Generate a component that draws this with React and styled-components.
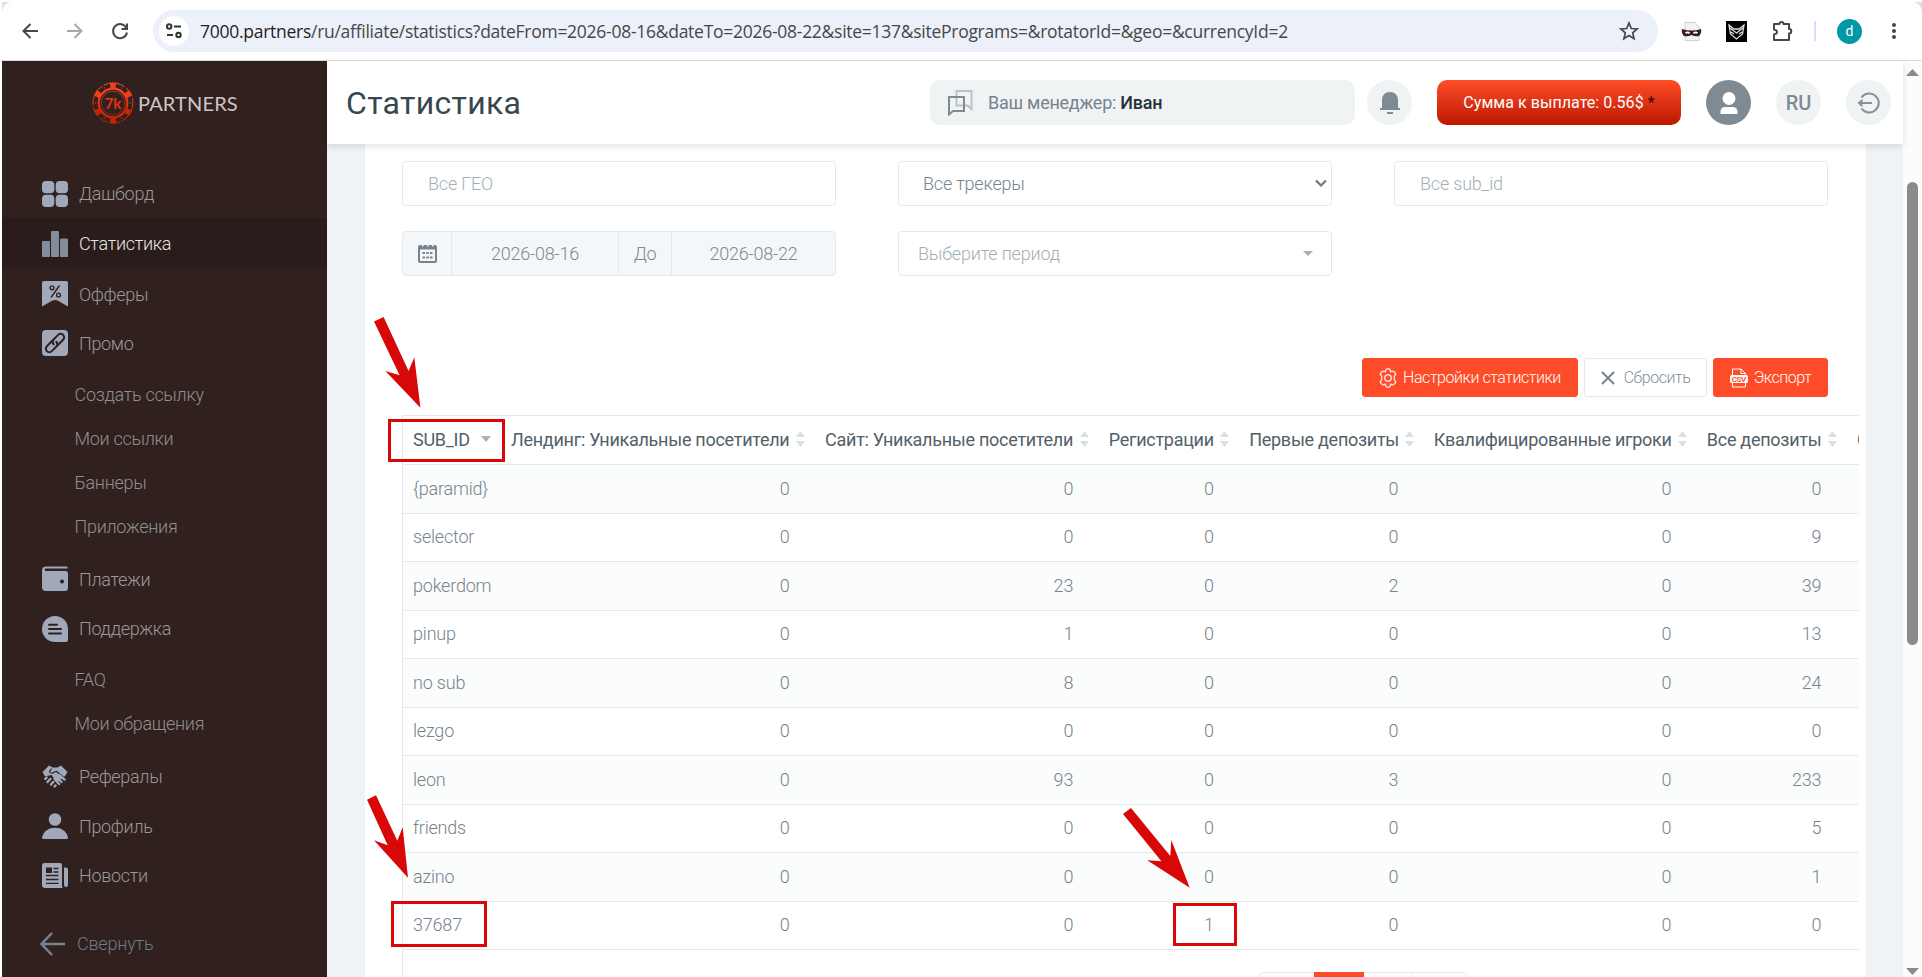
import styled, { createGlobalStyle } from 'styled-components';

const GlobalStyle = createGlobalStyle`
    * {
        box-sizing: border-box;
    }

    body {
        margin: 0;
        background: #fff;
        font-family: Roboto, "Liberation Sans", sans-serif;
        font-weight: 300;
        font-size: 18px;
        color: #76838f;
        overflow: hidden;
    }
`;

const Window = styled.div`
    position: relative;
    width: 1922px;
    height: 977px;
    padding: 2px 0 0 2px;
    overflow: hidden;
    display: flex;
    flex-direction: column;
`;

const BrowserBar = styled.div`
    height: 59px;
    flex: none;
    display: flex;
    align-items: center;
    border-bottom: 1px solid #dcdddf;
    background: #fff;
    padding: 0 22px 0 16px;
`;

const BarIcon = styled.svg`
    width: 24px;
    height: 24px;
    flex: none;
    margin-right: ${(props) => props.$gap || 0}px;
    fill: none;
    stroke: ${(props) => props.$color || '#474747'};
    stroke-width: 2;
`;

const AddressBar = styled.div`
    width: 1505px;
    height: 42px;
    flex: none;
    border-radius: 21px;
    background: #ecf0f9;
    display: flex;
    align-items: center;
    padding: 0 17px 0 6px;
    margin-right: 22px;
`;

const SiteInfo = styled.div`
    width: 30px;
    height: 30px;
    border-radius: 50%;
    background: #fff;
    display: flex;
    align-items: center;
    justify-content: center;
    margin-right: 11px;
`;

const Url = styled.div`
    flex: 1;
    font-family: "Open Sans", "Noto Sans", sans-serif;
    font-weight: 400;
    font-size: 17.5px;
    letter-spacing: -0.27px;
    color: #474747;
    white-space: nowrap;

    b {
        font-weight: 400;
        color: #1f1f1f;
    }
`;

const BarDivider = styled.div`
    width: 2px;
    height: 20px;
    flex: none;
    background: #d3e3fd;
    margin-right: 21px;
`;

const Profile = styled.div`
    width: 25px;
    height: 25px;
    flex: none;
    border-radius: 50%;
    background: #0097a7;
    color: #fff;
    font-size: 14px;
    font-weight: 400;
    display: flex;
    align-items: center;
    justify-content: center;
    margin-right: 20px;
`;

const Page = styled.div`
    flex: 1;
    display: flex;
    min-height: 0;
`;

const Sidebar = styled.nav`
    width: 325px;
    flex: none;
    background: #31211e;
    display: flex;
    flex-direction: column;
`;

const Logo = styled.div`
    height: 108px;
    padding: 21px 0 0 90px;
    flex: none;
    display: flex;
    align-items: flex-start;
`;

const LogoName = styled.span`
    font-family: Lato, sans-serif;
    font-weight: 400;
    font-size: 20px;
    line-height: 42px;
    letter-spacing: 0.15px;
    color: #cdc6c5;
    margin-left: 4px;
`;

const NavItem = styled.a`
    height: ${(props) => (props.$active ? 51 : 49.4)}px;
    flex: none;
    display: flex;
    align-items: center;
    padding-left: 40px;
    letter-spacing: -0.32px;
    color: ${(props) => (props.$active ? '#e8e4e3' : '#98999a')};
    background: ${(props) => (props.$active ? '#2a1c1a' : 'none')};

    svg {
        width: 26px;
        height: 26px;
        margin-right: 11px;
        fill: #a0a8b9;
    }
`;

const SubNav = styled.div`
    flex: none;
    padding: 4.5px 0 6.5px 72.5px;
`;

const SubItem = styled.a`
    height: 43.9px;
    display: flex;
    align-items: center;
    letter-spacing: -0.3px;
    color: #8f8f90;
`;

const Collapse = styled.a`
    display: flex;
    align-items: center;
    margin-top: 29px;
    height: 29px;
    padding-left: 38px;
    letter-spacing: -0.2px;
    color: #6f7a85;

    svg {
        width: 25px;
        height: 24px;
        margin-right: 12px;
        fill: none;
        stroke: #76838f;
        stroke-width: 2.5;
    }
`;

const Main = styled.main`
    flex: 1;
    min-width: 0;
    background: #eff3f5;
    display: flex;
    flex-direction: column;
`;

const Header = styled.header`
    height: 83px;
    flex: none;
    display: flex;
    align-items: center;
    padding: 0 12px 0 19px;
    background: #fff;
    box-shadow: 0 2px 7px rgba(0, 0, 0, 0.13);
    z-index: 1;
`;

const Title = styled.h1`
    margin: 0;
    flex: 1;
    font-size: 32px;
    font-weight: 400;
    letter-spacing: 0.3px;
    color: #37474f;
`;

const Manager = styled.div`
    width: 425px;
    height: 45px;
    border-radius: 10px;
    background: #eff3f4;
    display: flex;
    align-items: center;
    padding-left: 17px;
    margin-right: 12px;
    font-weight: 400;
    letter-spacing: -0.25px;
    white-space: pre;

    svg {
        margin-right: 14px;
    }

    b {
        font-weight: 500;
        color: #263238;
    }
`;

const Round = styled.div`
    width: 45px;
    height: 45px;
    flex: none;
    border-radius: 50%;
    background: ${(props) => (props.$dark ? '#7f8b94' : '#eff3f4')};
    color: #7f8b94;
    font-size: 20px;
    font-weight: 500;
    display: flex;
    align-items: center;
    justify-content: center;
    margin-left: ${(props) => props.$left || 0}px;
`;

const Payout = styled.button`
    width: 244px;
    height: 45px;
    margin-left: 25px;
    padding: 0;
    border: none;
    border-radius: 10px;
    background: linear-gradient(#ff4d28, #bb1800);
    font: 400 16px Roboto, sans-serif;
    letter-spacing: 0.05px;
    color: #fff;
    white-space: pre;

    span {
        color: #3a0800;
    }
`;

const Card = styled.section`
    flex: 1;
    min-height: 0;
    margin: 0 37px 0 38px;
    padding: 17px 0 0 37px;
    background: #fff;
    display: flex;
    flex-direction: column;
    overflow: hidden;
`;

const Filters = styled.div`
    display: grid;
    grid-template-columns: repeat(3, 434px);
    gap: 25px 62px;
`;

const Field = styled.div`
    height: 45px;
    border: 1px solid #e4eaec;
    border-radius: 4px;
    display: flex;
    align-items: center;
    justify-content: space-between;
    padding: 0 ${(props) => props.$right || 4}px 0 ${(props) => props.$left || 25}px;
    letter-spacing: -0.2px;
    color: ${(props) => (props.$filled ? '#76838f' : '#a3afb7')};
`;

const DateRange = styled(Field)`
    padding: 0;
    background: #f3f7f9;
    color: #7d8a95;
`;

const DatePart = styled.div`
    width: ${(props) => props.$width}px;
    height: 43px;
    display: flex;
    align-items: center;
    justify-content: center;

    & + & {
        border-left: 1px solid #e4eaec;
    }
`;

const Actions = styled.div`
    display: flex;
    justify-content: flex-end;
    gap: 6px;
    margin: 82px 38px 0 0;
`;

const Button = styled.button`
    width: ${(props) => props.$width}px;
    height: 39px;
    padding: 0;
    display: flex;
    align-items: center;
    justify-content: center;
    gap: ${(props) => props.$gap || 6}px;
    border: 1px solid ${(props) => (props.$light ? '#e4eaec' : '#ff4c28')};
    border-radius: 3px;
    background: ${(props) => (props.$light ? '#fff' : '#ff4c28')};
    color: ${(props) => (props.$light ? '#84909a' : '#fff')};
    font: 300 16px Roboto, sans-serif;
    letter-spacing: -0.45px;

    svg {
        flex: none;
    }
`;

const TableWrap = styled.div`
    flex: 1;
    min-height: 0;
    width: 1457px;
    margin-top: 18px;
    border-left: 1px solid #e4eaec;
    border-top: 1px solid #e4eaec;
    overflow: hidden;
`;

const Table = styled.table`
    width: 1644px;
    table-layout: fixed;
    border-collapse: separate;
    border-spacing: 0;
`;

const Th = styled.th`
    width: ${(props) => props.$width}px;
    height: 49px;
    padding: 0 0 2px 10px;
    border-bottom: 1px solid #e4eaec;
    text-align: left;
    font-weight: 400;
    letter-spacing: -0.28px;
    white-space: nowrap;
    color: #526069;
`;

const HeadLabel = styled.div`
    display: flex;
    align-items: center;
    justify-content: space-between;
    padding-right: 10px;

    svg {
        flex: none;
    }
`;

const Td = styled.td`
    height: 48.5px;
    padding: 0 25.5px 0 10px;
    border-bottom: 1px solid #e4eaec;
    text-align: right;
    line-height: 20px;
    letter-spacing: -0.2px;

    &:first-child {
        text-align: left;
    }
`;

const Tr = styled.tr`
    &:nth-child(odd) {
        background: #fbfcfc;
    }
`;

const Pagination = styled.div`
    display: flex;
    width: 208px;
    height: 40px;
    margin: 22px 0 0 856px;
    border: 1px solid #e4eaec;
    border-radius: 4px;
`;

const PageLink = styled.div`
    width: ${(props) => props.$width}px;
    margin-top: -1px;
    background: ${(props) => (props.$active ? '#ff4c28' : 'none')};
    border-right: ${(props) => (props.$line ? '1px solid #e4eaec' : 'none')};
`;

const ScrollTrack = styled.div`
    width: 19px;
    flex: none;
    background: #fcfcfc;
    display: flex;
    flex-direction: column;
    align-items: center;
    padding: 8px 0 2px;
`;

const ScrollThumb = styled.div`
    width: 11px;
    height: 463px;
    margin-top: 106px;
    margin-bottom: auto;
    border-radius: 6px;
    background: #8b8b8b;
`;

// highlights drawn over the page
const Marks = styled.svg`
    position: absolute;
    top: 0;
    left: 0;
    pointer-events: none;
`;

const DashboardIcon = () => (
    <svg viewBox="0 0 26 26">
        <rect width="12.3" height="12.3" rx="4" />
        <rect x="13.7" width="12.3" height="12.3" rx="4" />
        <rect y="13.7" width="12.3" height="12.3" rx="4" />
        <rect x="13.7" y="13.7" width="12.3" height="12.3" rx="4" />
    </svg>
);

const StatsIcon = () => (
    <svg viewBox="0 0 26 26">
        <g fill="#848d9b">
            <rect y="10" width="8" height="16" rx="1" />
            <rect x="9" width="8" height="26" rx="1" />
            <rect x="18" y="7.5" width="8" height="18.5" rx="1" />
        </g>
    </svg>
);

const OffersIcon = () => (
    <svg viewBox="0 0 26 26">
        <path d="M2 0h22a2 2 0 0 1 2 2v23.5L16 19.8q-3-1.5-6 0L0 25.5V2a2 2 0 0 1 2-2z" />
        <g fill="none" stroke="#31211e" strokeWidth="1.4">
            <circle cx="10" cy="6.8" r="1.9" />
            <circle cx="16.5" cy="14" r="1.9" />
            <path d="M17.500 4.500L9 16.500" />
        </g>
    </svg>
);

const PromoIcon = () => (
    <svg viewBox="0 0 26 26">
        <rect width="26" height="26" rx="4" />
        <g transform="rotate(-45 13 13)" fill="none" stroke="#31211e" strokeWidth="2" strokeLinecap="round">
            <path d="M13 9.500H5a3.500 3.500 0 0 0 0 7h6.500a3.500 3.500 0 0 0 3.300-3.500" />
            <path d="M13 16.500h8a3.500 3.500 0 0 0 0-7h-6.500a3.500 3.500 0 0 0-3.300 3.500" />
        </g>
    </svg>
);

const WalletIcon = () => (
    <svg viewBox="0 0 26 26">
        <path d="M4 .5h21.500v2H4a1.300 1.300 0 0 0 0 2.600h19.500a2.500 2.500 0 0 1 2.500 2.500V22a3 3 0 0 1-3 3H4a4 4 0 0 1-4-4V4.500a4 4 0 0 1 4-4z" />
        <path d="M3 3h23v1.800H3z" fill="#31211e" />
        <circle cx="20" cy="15.500" r="2" fill="#31211e" />
    </svg>
);

const SupportIcon = () => (
    <svg viewBox="0 0 26 26">
        <path d="M13 0a13 13 0 0 1 13 13v11a2 2 0 0 1-2 2H13a13 13 0 0 1 0-26z" />
        <path d="M7 8.800h8M7 13h12M7 17.500h12" stroke="#31211e" strokeWidth="2" strokeLinecap="round" />
    </svg>
);

const HandshakeIcon = () => (
    <svg viewBox="0 0 26 26">
        <path d="M7 1.500L.5 8l2.500 4.500L13 20l10-8 2.500-4L19 1.500l-3.500 2h-5z" />
        <path d="M2.500 12.500L9.500 11l6.500 9-5 1-8-5z" fill="#31211e" />
        <path d="M9.500 4.500L7.500 8q2 2.500 5 0l2-.5 8 6.500" fill="none" stroke="#31211e" strokeWidth="1.200" />
        <g fill="none" stroke="#a0a8b9" strokeWidth="2.400" strokeLinecap="round">
            <path d="M3.200 15l1.500-1.500M5.500 18l2.800-3M9 20.500l2.200-2.500M12.500 22.500l1-1" />
            <path d="M17 11l5.500 4.500M14.500 13l5 5M12.500 15l4.500 5" />
        </g>
    </svg>
);

const ProfileIcon = () => (
    <svg viewBox="0 0 26 26">
        <circle cx="13" cy="6.5" r="6.3" />
        <path d="M0 24.500C1.500 18 7 14.800 13 14.800S24.500 18 26 24.500q0 1.500-1.500 1.500h-23Q0 26 0 24.500z" />
    </svg>
);

const NewsIcon = () => (
    <svg viewBox="0 0 26 26">
        <path d="M2.500 0H18a2 2 0 0 1 2 2v21q0 1.500 1 2H3a3 3 0 0 1-3-3V2.500A2.500 2.500 0 0 1 2.500 0z" />
        <path d="M22 4.500h2a2 2 0 0 1 2 2V22a2 2 0 0 1-4 0z" />
        <path d="M4 4.500h6v5.500H4z" fill="#31211e" />
        <path d="M11.500 5.500h5M11.500 9h5M4 12.500h12.500M4 16.500h12.500M4 20.300h12.500" stroke="#31211e" strokeWidth="1.300" />
    </svg>
);

const Chip = () => (
    <svg width="42" height="42" viewBox="-21 -21 42 42">
        <defs>
            <linearGradient id="chip" x1="0" y1="-21" x2="0" y2="21" gradientUnits="userSpaceOnUse">
                <stop offset="0" stopColor="#ff4d28" />
                <stop offset="1" stopColor="#c01a02" />
            </linearGradient>
        </defs>
        <g fill="none" stroke="url(#chip)">
            <circle r="20" strokeWidth="1" strokeDasharray="10 2" />
            <circle r="14.3" strokeWidth="2.2" />
            <circle r="11.8" strokeWidth="0.6" />
        </g>
        {[0, 60, 120, 180, 240, 300].map(angle => (
            <path
                key={angle}
                d="M-3.200-20.500h6.400L2.500-14.500h-5z"
                fill={angle > 60 && angle < 300 ? '#c92205' : '#f03c1b'}
                transform={`rotate(${angle})`}
            />
        ))}
        {[30, 90, 150, 210, 270, 330].map(angle => (
            <circle key={angle} cy="-17.5" r="0.8" fill="#d92d0e" transform={`rotate(${angle})`} />
        ))}
        <text y="5.5" textAnchor="middle" fontFamily="Lato" fontSize="15" fontWeight="700" fill="#e63212">7k</text>
    </svg>
);

const SortIcon = () => (
    <svg width="9" height="16" viewBox="0 0 9 16" fill="#dcdfe1">
        <path d="M4.500 0L9 6H0zM4.500 16L0 10h9z" />
    </svg>
);

const columns = [
    ['Лендинг: Уникальные посетители', 314],
    ['Сайт: Уникальные посетители', 283.5],
    ['Регистрации', 140.5],
    ['Первые депозиты', 184.5],
    ['Квалифицированные игроки', 273],
    ['Все депозиты', 150],
    ['Сумма депозитов', 200],
];

const rows = [
    ['{paramid}', 0, 0, 0, 0, 0, 0],
    ['selector', 0, 0, 0, 0, 0, 9],
    ['pokerdom', 0, 23, 0, 2, 0, 39],
    ['pinup', 0, 1, 0, 0, 0, 13],
    ['no sub', 0, 8, 0, 0, 0, 24],
    ['lezgo', 0, 0, 0, 0, 0, 0],
    ['leon', 0, 93, 0, 3, 0, 233],
    ['friends', 0, 0, 0, 0, 0, 5],
    ['azino', 0, 0, 0, 0, 0, 1],
    ['37687', 0, 0, 1, 0, 0, 0],
];

const Browser = () => (
    <BrowserBar>
        <BarIcon $gap={21}>
            <path d="M20 12H6M12.500 5L5.500 12l7 7" />
        </BarIcon>
        <BarIcon $gap={21} $color="#a8a8a8">
            <path d="M4 12h14M11.500 5l7 7-7 7" />
        </BarIcon>
        <BarIcon $gap={21}>
            <path d="M18.400 9A7 7 0 1 0 19 13.500M19 4.500v5.500h-5.500" />
        </BarIcon>
        <AddressBar>
            <SiteInfo>
                <svg width="16" height="16" fill="none" stroke="#333" strokeWidth="2">
                    <circle cx="3.2" cy="3.5" r="2.2" />
                    <path d="M8 3.500h7M1 12h6" />
                    <circle cx="12.5" cy="12" r="2.2" />
                </svg>
            </SiteInfo>
            <Url>
                <b>7000.partners</b>/ru/affiliate/statistics?dateFrom=2026-08-16&amp;dateTo=2026-08-22&amp;site=137&amp;sitePrograms=&amp;rotatorId=&amp;geo=&amp;currencyId=2
            </Url>
            <BarIcon>
                <path d="M12 4l2.300 5.500 5.900.5-4.500 3.900 1.400 5.800-5.100-3.100-5.100 3.100 1.400-5.800L3.800 10l5.900-.5z" strokeWidth="1.700" />
            </BarIcon>
        </AddressBar>
        <BarIcon $gap={21}>
            <path d="M5 3.500h10l4 4v14H5z" fill="#f3f3f3" stroke="#d0d0d0" strokeWidth="1" />
            <path d="M2 10q10 3 19 0 1 4-2 7-4 1-7.500-1-3.500 2-7.500 1-3-3-2-7z" fill="#3b1d1d" stroke="none" />
            <path d="M5.500 14q2.500-1.500 4 .3M13.500 14.300q2-1.800 4-.3" stroke="#fff" strokeWidth="1.800" />
        </BarIcon>
        <BarIcon $gap={21}>
            <path d="M1 2h21v21H1z" fill="#000" stroke="none" />
            <path d="M4 6l5 4h5l5-4-1.500 9-6 5-6-5zM5 9l6.500 5L18 9M6 13l3 2M17 13l-3 2" stroke="#ddd" strokeWidth="1.300" />
        </BarIcon>
        <BarIcon $gap={20}>
            <path d="M4 5h5.500a2 2 0 0 1 4 0h5.500v5a2 2 0 0 1 0 4.500V21H4v-5.500q3-.5 3-2.500t-3-2.500z" strokeLinejoin="round" />
        </BarIcon>
        <BarDivider />
        <Profile>d</Profile>
        <BarIcon>
            <g fill="#474747" stroke="none">
                <circle cx="12" cy="6" r="2" />
                <circle cx="12" cy="12" r="2" />
                <circle cx="12" cy="18" r="2" />
            </g>
        </BarIcon>
    </BrowserBar>
);

const Navigation = () => (
    <Sidebar>
        <Logo>
            <Chip />
            <LogoName>PARTNERS</LogoName>
        </Logo>
        <NavItem><DashboardIcon />Дашборд</NavItem>
        <NavItem $active><StatsIcon />Статистика</NavItem>
        <NavItem><OffersIcon />Офферы</NavItem>
        <NavItem><PromoIcon />Промо</NavItem>
        <SubNav>
            <SubItem>Создать ссылку</SubItem>
            <SubItem>Мои ссылки</SubItem>
            <SubItem>Баннеры</SubItem>
            <SubItem>Приложения</SubItem>
        </SubNav>
        <NavItem><WalletIcon />Платежи</NavItem>
        <NavItem><SupportIcon />Поддержка</NavItem>
        <SubNav>
            <SubItem>FAQ</SubItem>
            <SubItem>Мои обращения</SubItem>
        </SubNav>
        <NavItem><HandshakeIcon />Рефералы</NavItem>
        <NavItem><ProfileIcon />Профиль</NavItem>
        <NavItem><NewsIcon />Новости</NavItem>
        <Collapse>
            <svg viewBox="0 0 25 24">
                <path d="M12 1L1.500 12 12 23M1.500 12H25" />
            </svg>
            Свернуть
        </Collapse>
    </Sidebar>
);

const TopBar = () => (
    <Header>
        <Title>Статистика</Title>
        <Manager>
            <svg width="27" height="27" fill="none" strokeWidth="2">
                <path d="M9.500 7V2h15v18l-4-3.500h-11V7" stroke="#b9c1c6" />
                <path d="M2 8h15v14H6l-4 3.500z" stroke="#7f8b94" />
            </svg>
            Ваш менеджер: <b>Иван</b>
        </Manager>
        <Round>
            <svg width="22" height="24" fill="#7f8b94">
                <path d="M11 1c5 0 8 3.500 8 8v8h2v2H1v-2h2V9c0-4.500 3-8 8-8zM8 21h6v2H8z" />
            </svg>
        </Round>
        <Payout>Сумма к выплате: 0.56$ <span>*</span></Payout>
        <Round $dark $left={25}>
            <svg width="18" height="24" fill="#fff">
                <circle cx="9" cy="7.5" r="6.5" />
                <path d="M.5 23v-2q0-5 5-5h7q5 0 5 5v2z" />
            </svg>
        </Round>
        <Round $left={25}>RU</Round>
        <Round $left={25}>
            <svg width="24" height="24" fill="none" stroke="#84919b" strokeWidth="2">
                <path d="M4.500 6.500a9.500 9.500 0 1 1 0 11M15 12H2M5.500 9L2 12l3.500 3" />
            </svg>
        </Round>
    </Header>
);

const FilterPanel = () => (
    <Filters>
        <Field>Все ГЕО</Field>
        <Field $filled $left={24}>
            Все трекеры
            <svg width="12" height="9" fill="none" stroke="#6b7783" strokeWidth="2.2">
                <path d="M1 1.500l5 5 5-5" />
            </svg>
        </Field>
        <Field>Все sub_id</Field>
        <DateRange>
            <DatePart $width={48}>
                <svg width="19" height="20" fill="#76838f">
                    <path d="M2 1h2v1.500h1.500V1H9v1.500h1.500V1H14v1.500h1.500V1H17a2 2 0 0 1 2 2v14a2 2 0 0 1-2 2H2a2 2 0 0 1-2-2V3a2 2 0 0 1 2-2zm0 4.500v11.500h15V5.500z" fillRule="evenodd" />
                    <path d="M4.500 8h2.500v2H4.500zM8.300 8h2.500v2H8.300zM12 8h2.500v2H12zM4.500 12.500h2.500v2H4.500zM8.300 12.500h2.500v2H8.300zM12 12.500h2.500v2H12z" />
                </svg>
            </DatePart>
            <DatePart $width={167}>2026-08-16</DatePart>
            <DatePart $width={53}>До</DatePart>
            <DatePart $width={164}>2026-08-22</DatePart>
        </DateRange>
        <Field $left={19} $right={18}>
            Выберите период
            <svg width="10" height="5" fill="#a3afb7">
                <path d="M0 0h10L5 5z" />
            </svg>
        </Field>
    </Filters>
);

const StatsTable = () => (
    <Table>
        <thead>
            <tr>
                <Th $width={98}>
                    <HeadLabel>
                        SUB_ID
                        <svg width="10" height="6" fill="#a9b2b8">
                            <path d="M0 0h10L5 6z" />
                        </svg>
                    </HeadLabel>
                </Th>
                {columns.map(([name, width]) => (
                    <Th key={name} $width={width}>
                        <HeadLabel>{name}<SortIcon /></HeadLabel>
                    </Th>
                ))}
            </tr>
        </thead>
        <tbody>
            {rows.map(row => (
                <Tr key={row[0]}>
                    {row.map((value, i) => <Td key={i}>{value}</Td>)}
                    <Td />
                </Tr>
            ))}
        </tbody>
    </Table>
);

const App = () => (
    <Window>
        <GlobalStyle />
        <Browser />
        <Page>
            <Navigation />
            <Main>
                <TopBar />
                <Card>
                    <FilterPanel />
                    <Actions>
                        <Button $width={216}>
                            <svg width="18" height="22" viewBox="0 0 18 22" fill="none" stroke="#ffe0d9" strokeWidth="1.400">
                                <path d="M7 2.500q2-1.500 4 0l.6 2.200 2.200-.5q2.500.6 3 3l-1.500 2 0 3.600 1.500 2q-.5 2.400-3 3l-2.200-.5-.6 2.200q-2 1.500-4 0l-.6-2.200-2.200.5q-2.500-.6-3-3l1.500-2V9.200l-1.500-2q.5-2.400 3-3l2.200.5z" />
                                <circle cx="9" cy="11" r="3.200" />
                            </svg>
                            Настройки статистики
                        </Button>
                        <Button $light $width={123} $gap={9}>
                            <svg width="14" height="14" fill="none" stroke="#76838f" strokeWidth="2">
                                <path d="M1 1l12 12M13 1L1 13" />
                            </svg>
                            Сбросить
                        </Button>
                        <Button $width={115}>
                            <svg width="18" height="20" fill="none" stroke="#fff">
                                <path d="M2.500 7V1H11l4.500 4.500V7M2.500 15v4h13v-4M11 1v4.500h4.500" />
                                <rect x="0" y="7" width="18" height="8" rx="1.5" fill="#fff" stroke="none" />
                                <text x="8.8" y="14" textAnchor="middle" fontSize="8" fontWeight="700" fill="#ff4c28" stroke="none">CSV</text>
                            </svg>
                            Экспорт
                        </Button>
                    </Actions>
                    <TableWrap>
                        <StatsTable />
                        <Pagination>
                            <PageLink $width={54} />
                            <PageLink $width={50} $active />
                            <PageLink $width={48} $line />
                            <PageLink $width={54} />
                        </Pagination>
                    </TableWrap>
                </Card>
            </Main>
            <ScrollTrack>
                <svg width="13" height="7" fill="#8b8b8b"><path d="M6.500 0L13 7H0z" /></svg>
                <ScrollThumb />
                <svg width="13" height="7" fill="#8b8b8b"><path d="M0 0h13L6.500 7z" /></svg>
            </ScrollTrack>
        </Page>
        <Marks width="1922" height="977">
            <path d="M2 2h9q-7 1-9 9zM1922 2h-9q7 1 9 9z" fill="#dde3ee" />
            <g fill="none" stroke="#d80808" strokeWidth="3">
                <rect x="389.5" y="420.5" width="114" height="40" />
                <rect x="392.5" y="902.5" width="93" height="43" />
                <rect x="1174.5" y="904.5" width="61" height="40" />
            </g>
            <g fill="#d80808">
                <path d="M374 321.500l9.600-4.500 25 54 5.700-13.700 6.100 50.400-35-36.700 14.200 4.300z" />
                <path d="M367 799.700l9-4.400 21.300 45.400 5.400-13.400 5.300 50.400-34-37.400 13.700 5z" />
                <path d="M1123 814l8-6 39.300 48 1-16 18.400 47.700-42.500-27.400 14.200 1z" />
            </g>
        </Marks>
    </Window>
);

export default App;
